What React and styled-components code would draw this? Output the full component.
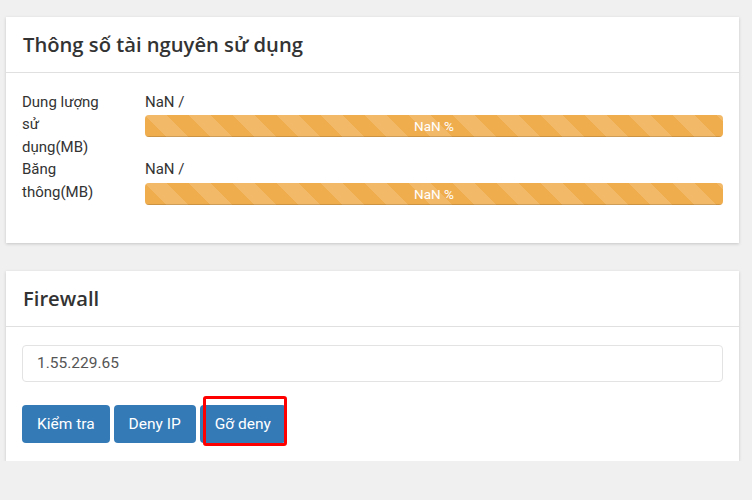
import styled, { createGlobalStyle } from "styled-components";

const GlobalStyle = createGlobalStyle`
  body {
    margin: 0;
    background: #f0f0f0;
    font-family: Roboto, "Liberation Sans", sans-serif;
    color: #333;
  }
`;

const usage = [
  { label: "Dung lượng sử dụng(MB)", value: "NaN /", percent: "NaN %" },
  { label: "Băng thông(MB)", value: "NaN /", percent: "NaN %" },
];

const App = () => {
  return (
    <>
      <GlobalStyle />
      <Page>
        <Card>
          <CardHeader>
            <h3>Thông số tài nguyên sử dụng</h3>
          </CardHeader>
          <CardBody $top={18} $bottom={38}>
            {usage.map((row) => (
              <StatRow key={row.label}>
                <StatLabel>{row.label}</StatLabel>
                <StatValue>
                  <div>{row.value}</div>
                  <Progress>
                    <ProgressBar style={{ width: "100%" }}>{row.percent}</ProgressBar>
                  </Progress>
                </StatValue>
              </StatRow>
            ))}
          </CardBody>
        </Card>

        <Card>
          <CardHeader>
            <h3>Firewall</h3>
          </CardHeader>
          <CardBody $top={18} $bottom={18}>
            <IpInput defaultValue="1.55.229.65" />
            <ButtonRow>
              <Button>Kiểm tra</Button>
              <Button>Deny IP</Button>
              <Marked>
                <Button>Gỡ deny</Button>
                <MarkBox />
              </Marked>
            </ButtonRow>
          </CardBody>
        </Card>
      </Page>
    </>
  );
};

export default App;

const Page = styled.div`
  display: flex;
  flex-direction: column;
  gap: 28px;
  padding: 17px 13px 0 6px;
`;

const Card = styled.section`
  background: #fff;
  box-shadow: 0 1px 3px rgba(0, 0, 0, 0.18);
`;

const CardHeader = styled.div`
  padding: 14px 17px;
  border-bottom: 1px solid #e0e0e0;

  h3 {
    margin: 0;
    font-family: "Open Sans", "Liberation Sans", sans-serif;
    font-weight: 600;
    font-size: 20.2px;
    line-height: 27px;
    color: #333;
  }
`;

const CardBody = styled.div`
  padding: ${({ $top }) => $top ?? 15}px 16px ${({ $bottom }) => $bottom ?? 16}px;
`;

const StatRow = styled.div`
  display: grid;
  grid-template-columns: 82px 1fr;
  column-gap: 41px;
  font-size: 15px;
  line-height: 22.4px;
  color: #333;
`;

const StatLabel = styled.div``;

const StatValue = styled.div``;

const Progress = styled.div`
  height: 22px;
  margin-top: 2px;
  border-radius: 4px;
  overflow: hidden;
  background: #f5f5f5;
`;

const ProgressBar = styled.div`
  height: 100%;
  background-color: #f0ad4e;
  background-image: linear-gradient(
    45deg,
    rgba(255, 255, 255, 0.15) 25%,
    transparent 25%,
    transparent 50%,
    rgba(255, 255, 255, 0.15) 50%,
    rgba(255, 255, 255, 0.15) 75%,
    transparent 75%,
    transparent
  );
  background-size: 44px 44px;
  box-shadow: inset 0 -1px 0 rgba(0, 0, 0, 0.15);
  color: #fff;
  font-size: 13.5px;
  line-height: 22px;
  text-align: center;
`;

const IpInput = styled.input`
  display: block;
  box-sizing: border-box;
  width: 100%;
  height: 37px;
  padding: 0 14px;
  border: 1px solid #e3e3e3;
  border-radius: 4px;
  font-family: Roboto, "Liberation Sans", sans-serif;
  font-size: 15.5px;
  color: #555;
  outline: none;
`;

const ButtonRow = styled.div`
  display: flex;
  gap: 4px;
  margin-top: 23px;
`;

const Button = styled.button`
  height: 38px;
  padding: 0 15px;
  border: none;
  border-radius: 4px;
  background: #337ab7;
  color: #fff;
  font-family: Roboto, "Liberation Sans", sans-serif;
  font-size: 15.5px;
  cursor: pointer;
`;

const Marked = styled.span`
  position: relative;
  display: inline-flex;
`;

const MarkBox = styled.span`
  position: absolute;
  left: 3px;
  right: -1px;
  top: -9px;
  bottom: -3px;
  border: 3px solid #f00;
  border-radius: 3px;
  pointer-events: none;
`;
